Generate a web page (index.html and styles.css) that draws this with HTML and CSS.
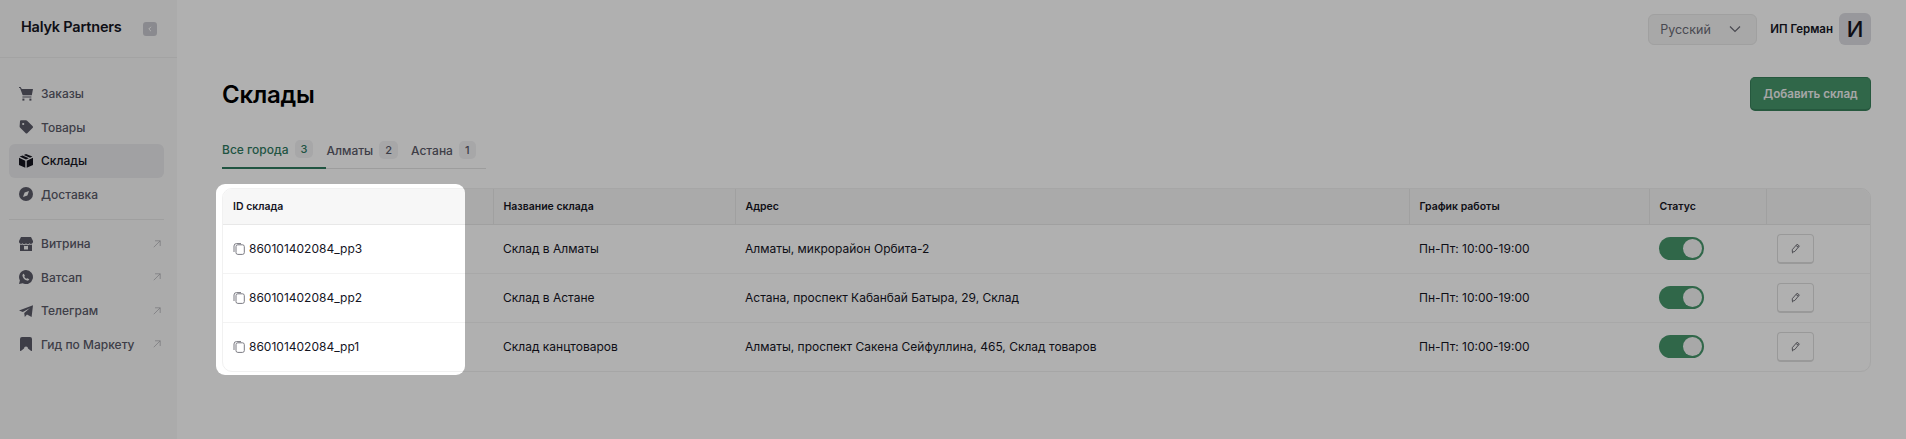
FILE: index.html
```html
<!DOCTYPE html>
<html lang="ru">
<head>
<meta charset="utf-8">
<title>Склады</title>
<link rel="stylesheet" href="styles.css">
</head>
<body>
<svg class="defs" width="0" height="0">
  <symbol id="i-copy" viewBox="0 0 12 12"><rect x="3" y="1.8" width="8.300" height="9.600" rx="1.800" fill="none" stroke="currentColor"/><path d="M1 9V3a2.400 2.400 0 0 1 2.400-2.400H8" fill="none" stroke="currentColor"/></symbol>
  <symbol id="i-pen" viewBox="0 0 12 12"><path d="M7.600 1.400l2.600 1.800-4.900 6-2.700.9-.1-2.800zM6.600 2.800l2.500 1.800M2.200 10.900l1-.4" fill="none" stroke="currentColor" stroke-width=".9" stroke-linejoin="round"/></symbol>
  <symbol id="i-ext" viewBox="0 0 10 10"><path d="M1 9L9 1M2.500 1H9v6.500" fill="none" stroke="currentColor" stroke-width=".8"/></symbol>
</svg>
<div class="app">
  <aside class="sidebar">
    <div class="brand">
      <span class="brand-name">Halyk Partners</span>
      <span class="collapse"><svg width="8" height="8" viewBox="0 0 8 8"><path d="M5 1.800L2.800 4 5 6.200" fill="none" stroke="#fff" stroke-width="1"/></svg></span>
    </div>
    <nav class="nav">
      <a class="nav-item"><svg class="nav-icon" viewBox="0 0 14 14"><path d="M0 0h1.500l1.300 2H14l-1.200 6.200H3.700L1 1H0zM3.400 9.600h9v.9h-9z" fill="currentColor"/><rect x="3.400" y="11.600" width="2" height="2" fill="currentColor"/><rect x="10.400" y="11.600" width="2" height="2" fill="currentColor"/></svg><span>Заказы</span></a>
      <a class="nav-item"><svg class="nav-icon" viewBox="0 0 14 14"><path d="M1 1.200A1 1 0 0 1 2 .2h5a1.600 1.600 0 0 1 1.100.5l5.400 5.400a1.400 1.400 0 0 1 0 2l-5 5a1.400 1.400 0 0 1-2 0L1 7.600a1.600 1.600 0 0 1-.4-1z" fill="currentColor"/><circle cx="4.200" cy="4" r="1.100" fill="#f8f8f8"/></svg><span>Товары</span></a>
      <a class="nav-item is-active"><svg class="nav-icon" viewBox="0 0 14 14"><path d="M7 0l6.400 2.600L11 3.800 4.800 1zM3.600 1.500L9.800 4.300 7 5.600.6 2.600zM0 3.800l6.300 3v7L0 11zM7.700 6.800l6.300-3V11l-6.300 2.800z" fill="currentColor"/></svg><span>Склады</span></a>
      <a class="nav-item"><svg class="nav-icon" viewBox="0 0 14 14"><circle cx="7" cy="7" r="7" fill="currentColor"/><path d="M10 4L8.400 8.400 4 10l1.600-4.400z" fill="#f8f8f8"/></svg><span>Доставка</span></a>
      <div class="nav-divider"></div>
      <a class="nav-item"><svg class="nav-icon" viewBox="0 0 14 14"><path d="M2 0h10l2 4v1a2 2 0 0 1-3.500 1.200 2.400 2.400 0 0 1-3.500 0 2.400 2.400 0 0 1-3.500 0A2 2 0 0 1 0 5V4zM1 7.500a3 3 0 0 0 2.500.1 3.400 3.400 0 0 0 3.500 0 3.400 3.400 0 0 0 3.500 0 3 3 0 0 0 2.500-.1V14H1zM5 9v3.500h4V9z" fill="currentColor" fill-rule="evenodd"/></svg><span>Витрина</span><svg class="nav-ext"><use href="#i-ext"/></svg></a>
      <a class="nav-item"><svg class="nav-icon" viewBox="0 0 14 14"><path d="M7 0a7 7 0 1 1-3.300 13.200L0 14l.9-3.600A7 7 0 0 1 7 0z" fill="currentColor"/><path d="M4.800 3.800l1.100 2-.6.900c.5 1 1.100 1.600 2.100 2.100l.9-.6 2 1.100c-.4 1.100-1.200 1.500-2.200 1.300C5.800 10.100 4 8.300 3.500 6c-.2-1 .2-1.800 1.300-2.200z" fill="#f8f8f8"/></svg><span>Ватсап</span><svg class="nav-ext"><use href="#i-ext"/></svg></a>
      <a class="nav-item"><svg class="nav-icon" viewBox="0 0 14 14"><path d="M14 1.200L12.600 13 8 10.600 5.800 13 5.200 8.900 11 4 3.800 8 0 6.500z" fill="currentColor"/></svg><span>Телеграм</span><svg class="nav-ext"><use href="#i-ext"/></svg></a>
      <a class="nav-item"><svg class="nav-icon" viewBox="0 0 14 14"><path d="M3 0h8a2 2 0 0 1 2 2v11.500a.5.5 0 0 1-.8.400L9 11.500a2 2 0 0 0-4 0l-3.200 2.400a.5.5 0 0 1-.8-.4V2a2 2 0 0 1 2-2z" fill="currentColor"/></svg><span>Гид по Маркету</span><svg class="nav-ext"><use href="#i-ext"/></svg></a>
    </nav>
  </aside>
  <main class="main">
    <header class="topbar">
      <div class="lang"><span>Русский</span><svg width="12" height="8" viewBox="0 0 12 8"><path d="M1 1.500l5 5 5-5" fill="none" stroke="currentColor" stroke-width="1.200"/></svg></div>
      <span class="user">ИП Герман</span>
      <span class="avatar">И</span>
    </header>
    <div class="title-row">
      <h1 class="title">Склады</h1>
      <button class="add-btn">Добавить склад</button>
    </div>
    <div class="tabs">
      <a class="tab is-active">Все города<span class="badge">3</span></a>
      <a class="tab">Алматы<span class="badge">2</span></a>
      <a class="tab">Астана<span class="badge">1</span></a>
    </div>
    <div class="table-wrap">
      <table class="table">
        <colgroup>
          <col class="c1"><col class="c2"><col class="c3"><col class="c4"><col class="c5"><col class="c6">
        </colgroup>
        <thead>
          <tr><th>ID склада</th><th>Название склада</th><th>Адрес</th><th>График работы</th><th>Статус</th><th></th></tr>
        </thead>
        <tbody>
          <tr>
            <td><span class="id-cell"><svg class="copy"><use href="#i-copy"/></svg>860101402084_pp3</span></td>
            <td>Склад в Алматы</td>
            <td>Алматы, микрорайон Орбита-2</td>
            <td>Пн-Пт: 10:00-19:00</td>
            <td><span class="toggle"></span></td>
            <td><span class="edit"><svg class="pen"><use href="#i-pen"/></svg></span></td>
          </tr>
          <tr>
            <td><span class="id-cell"><svg class="copy"><use href="#i-copy"/></svg>860101402084_pp2</span></td>
            <td>Склад в Астане</td>
            <td>Астана, проспект Кабанбай Батыра, 29, Склад</td>
            <td>Пн-Пт: 10:00-19:00</td>
            <td><span class="toggle"></span></td>
            <td><span class="edit"><svg class="pen"><use href="#i-pen"/></svg></span></td>
          </tr>
          <tr>
            <td><span class="id-cell"><svg class="copy"><use href="#i-copy"/></svg>860101402084_pp1</span></td>
            <td>Склад канцтоваров</td>
            <td>Алматы, проспект Сакена Сейфуллина, 465, Склад товаров</td>
            <td>Пн-Пт: 10:00-19:00</td>
            <td><span class="toggle"></span></td>
            <td><span class="edit"><svg class="pen"><use href="#i-pen"/></svg></span></td>
          </tr>
        </tbody>
      </table>
    </div>
  </main>
</div>
<div class="spotlight"></div>
</body>
</html>
```

FILE: styles.css
```css
* { box-sizing: border-box; }
html, body { margin: 0; height: 439px; overflow: hidden; }
body { background: #fff; color: #15151f; font-family: Inter, "Noto Sans", sans-serif; position: relative; }
.defs { position: absolute; }
.app { display: flex; height: 439px; }

.sidebar { width: 177px; flex: none; background: #f8f8f8; }
.brand { height: 58px; border-bottom: 1px solid #ececec; display: flex; align-items: center; justify-content: space-between; padding: 0 20px 5px 21px; }
.brand-name { font-size: 14.500px; font-weight: 600; letter-spacing: -0.2px; color: #15151f; }
.collapse { width: 14px; height: 14px; margin-top: 5px; border-radius: 3px; background: #c9c9cf; display: flex; align-items: center; justify-content: center; }
.nav { padding: 19px 13px 0 9px; display: flex; flex-direction: column; }
.nav-item { height: 33.500px; display: flex; align-items: center; padding: 0 3px 0 10px; border-radius: 6px; font-size: 12px; font-weight: 500; color: #5a5a68; }
.nav-item span { margin-left: 8px; flex: 1; }
.nav-item.is-active { background: #e9e9ec; color: #15151f; }
.nav-icon { width: 14px; height: 14px; flex: none; }
.nav-ext { width: 8px; height: 8px; color: #a4a4aa; flex: none; }
.nav-divider { height: 1px; margin: 8px 0 7px; background: #e6e6e6; }

.main { flex: 1; min-width: 0; padding: 13px 35px 0 45px; }
.topbar { display: flex; align-items: center; justify-content: flex-end; height: 32px; }
.lang { width: 109px; height: 31px; border: 1px solid #e8e8e8; border-radius: 6px; background: #f4f4f4; display: flex; align-items: center; justify-content: space-between; padding: 0 15px 0 11px; font-size: 12.500px; color: #6a6a74; }
.user { margin-left: 13px; font-size: 11.500px; font-weight: 600; }
.avatar { margin-left: 6px; width: 32px; height: 32px; border-radius: 6px; background: #dcdce2; display: flex; align-items: center; justify-content: center; font-size: 22px; font-weight: 500; }
.title-row { display: flex; justify-content: space-between; align-items: center; margin-top: 32px; height: 34px; }
.title { margin: 0; font-size: 24px; font-weight: 600; letter-spacing: -0.2px; color: #000; }
.add-btn { width: 121px; height: 34px; border: 1px solid #38805a; border-bottom-width: 2px; border-radius: 5px; background: #46956b; color: #f2f2f2; font: 600 11.600px Inter, sans-serif; padding: 0; }

.tabs { display: flex; width: 264px; margin-top: 22px; height: 36px; border-bottom: 1px solid #e4e4e4; }
.tab { display: flex; align-items: center; height: 36px; padding-bottom: 2px; font-size: 12px; font-weight: 500; color: #5a5a68; padding-right: 13px; white-space: nowrap; }
.tab.is-active { color: #2f7a5f; border-bottom: 2px solid #2f7a5f; }
.badge { margin-left: 6px; min-width: 16px; height: 18px; padding: 0 6px; border-radius: 5px; background: #f2f2f4; display: flex; align-items: center; justify-content: center; font-size: 11px; }

.table-wrap { margin-top: 19px; border: 1px solid #f1f1f1; border-radius: 10px; overflow: hidden; width: 1649px; }
.table { border-collapse: collapse; table-layout: fixed; width: 100%; font-size: 12px; }
.c1 { width: 270px; } .c2 { width: 242px; } .c3 { width: 674px; } .c4 { width: 240px; } .c5 { width: 117px; } .c6 { width: auto; }
th { height: 35px; padding: 0 10px; background: #f7f7f7; border-bottom: 1px solid #e8e8e8; border-left: 1px solid #e8e8e8; font-size: 10.500px; font-weight: 600; text-align: left; }
th:first-child, td:first-child { border-left: 0; }
td { height: 49px; padding: 0 10px; border-bottom: 1px solid #f3f3f3; font-weight: 400; color: #15151f; white-space: nowrap; }
tr:last-child td { border-bottom: 0; }
.id-cell { display: flex; align-items: center; }
.copy { width: 12px; height: 12px; color: #7a7a82; margin-right: 4px; flex: none; }
.toggle { display: block; width: 45px; height: 23px; border-radius: 12px; background: #46956b; position: relative; }
.toggle::after { content: ""; position: absolute; right: 2px; top: 2px; width: 19px; height: 19px; border-radius: 50%; background: #f4f4f4; }
.edit { margin-left: 1px; width: 37px; height: 30px; border: 1px solid #dedede; border-bottom-width: 2px; border-radius: 4px; display: flex; align-items: center; justify-content: center; }
.pen { width: 11px; height: 11px; color: #55555f; }

.spotlight { position: absolute; left: 216px; top: 184px; width: 249px; height: 191px; border-radius: 9px; box-shadow: 0 0 0 2200px rgba(0, 0, 0, 0.31); }
```
